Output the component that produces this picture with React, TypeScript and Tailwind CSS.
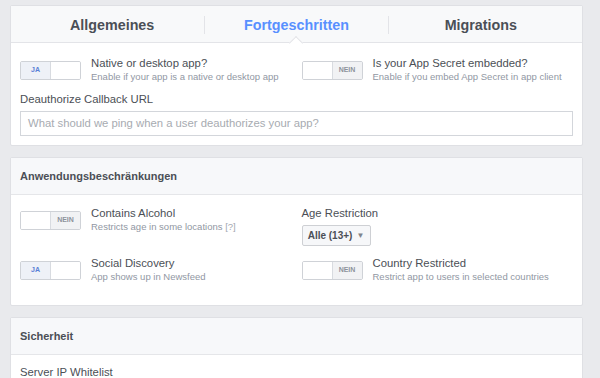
import React from "react";

const font = { fontFamily: '"Liberation Sans", Arial, sans-serif' };

const Toggle = ({ on }: { on: boolean }) => (
  <div className="flex h-[19px] w-[61px] shrink-0 overflow-hidden rounded-[2px] border border-[#cfd2d7] bg-white">
    {on ? (
      <>
        <div className="flex w-[30px] items-center justify-center border-r border-[#d8dbe0] bg-[#eef1f7] text-[7px] font-bold text-[#5a7fd6]">
          JA
        </div>
        <div className="flex-1 bg-white" />
      </>
    ) : (
      <>
        <div className="flex-1 bg-white" />
        <div className="flex w-[30px] items-center justify-center border-l border-[#d8dbe0] bg-[#f1f2f4] text-[7px] font-bold text-[#8d939c]">
          NEIN
        </div>
      </>
    )}
  </div>
);

const ToggleRow = ({
  on,
  title,
  sub,
}: {
  on: boolean;
  title: string;
  sub: React.ReactNode;
}) => (
  <div className="flex items-start gap-[10px]">
    <div className="mt-[5px]">
      <Toggle on={on} />
    </div>
    <div>
      <div className="text-[11.3px] leading-[14px] text-[#4b4f56]">{title}</div>
      <div className="text-[9.5px] leading-[13px] text-[#9197a3]">{sub}</div>
    </div>
  </div>
);

const SectionHeader = ({ title }: { title: string }) => (
  <div className="flex h-[37px] items-center border-b border-[#e5e6e9] bg-[#f7f8fa] px-[9px] pt-[1px] text-[11px] font-bold text-[#4b4f56]">
    {title}
  </div>
);

export default function App() {
  return (
    <div className="h-[378px] w-[600px] overflow-hidden bg-[#e9eaed] pl-[10px] pt-[5px]" style={font}>
      {/* Tabs card */}
      <div className="w-[573px] rounded-[2px] border border-[#dfe0e4] bg-white">
        <div className="grid h-[37px] grid-cols-3 border-b border-[#e3e4e8] bg-[#f8f9fa] px-[9px]">
          <div className="flex items-center justify-center pt-[3px] text-[14.3px] font-bold text-[#4b4f56]">
            Allgemeines
          </div>
          <div className="relative flex items-center justify-center pt-[3px] text-[14.3px] font-bold text-[#5890ff]">
            <div className="absolute left-0 top-[10px] h-[18px] border-l border-[#e3e4e8]" />
            <div className="absolute right-0 top-[10px] h-[18px] border-r border-[#e3e4e8]" />
            Fortgeschritten
            <div className="absolute bottom-[-6px] left-1/2 ml-[-5px] h-[10px] w-[10px] rotate-45 border-l border-t border-[#e3e4e8] bg-white" />
          </div>
          <div className="flex items-center justify-center pt-[3px] text-[14.3px] font-bold text-[#4b4f56]">
            Migrations
          </div>
        </div>
        <div className="px-[9px] pb-[9px] pt-[13px]">
          <div className="grid grid-cols-2 gap-x-[10px]">
            <ToggleRow on title="Native or desktop app?" sub="Enable if your app is a native or desktop app" />
            <ToggleRow on={false} title="Is your App Secret embedded?" sub="Enable if you embed App Secret in app client" />
          </div>
          <div className="mt-[8px] text-[11.3px] leading-[16px] text-[#4b4f56]">Deauthorize Callback URL</div>
          <div className="mt-[4px] flex h-[25px] items-center border border-[#d3d6db] bg-white px-[7px] text-[11.3px] text-[#a7abb1]">
            What should we ping when a user deauthorizes your app?
          </div>
        </div>
      </div>

      {/* Anwendungsbeschränkungen */}
      <div className="mt-[11px] w-[573px] rounded-[2px] border border-[#dfe0e4] bg-white">
        <SectionHeader title="Anwendungsbeschränkungen" />
        <div className="px-[9px] pb-[22px] pt-[11px]">
          <div className="grid grid-cols-2 gap-x-[10px] gap-y-[10px]">
            <div className="h-[40px]">
              <ToggleRow
                on={false}
                title="Contains Alcohol"
                sub={<>Restricts age in some locations <span className="text-[#a3a8b0]">[?]</span></>}
              />
            </div>
            <div>
              <div className="text-[11.3px] leading-[14px] text-[#4b4f56]">Age Restriction</div>
              <div className="mt-[5px] flex h-[21px] w-[69px] items-center justify-center gap-[4px] rounded-[2px] border border-[#ced0d4] bg-[#f6f7f9] text-[10px] font-bold text-[#4b4f56]">
                Alle (13+)
                <span className="text-[8px] text-[#7f848c]">▼</span>
              </div>
            </div>
            <ToggleRow on title="Social Discovery" sub="App shows up in Newsfeed" />
            <ToggleRow on={false} title="Country Restricted" sub="Restrict app to users in selected countries" />
          </div>
        </div>
      </div>

      {/* Sicherheit */}
      <div className="mt-[11px] w-[573px] rounded-[2px] border border-[#dfe0e4] bg-white">
        <SectionHeader title="Sicherheit" />
        <div className="px-[9px] pb-[20px] pt-[9px]">
          <div className="text-[11.3px] leading-[16px] text-[#4b4f56]">Server IP Whitelist</div>
          <div className="mt-[4px] h-[25px] border border-[#d3d6db]" />
        </div>
      </div>
    </div>
  );
}
